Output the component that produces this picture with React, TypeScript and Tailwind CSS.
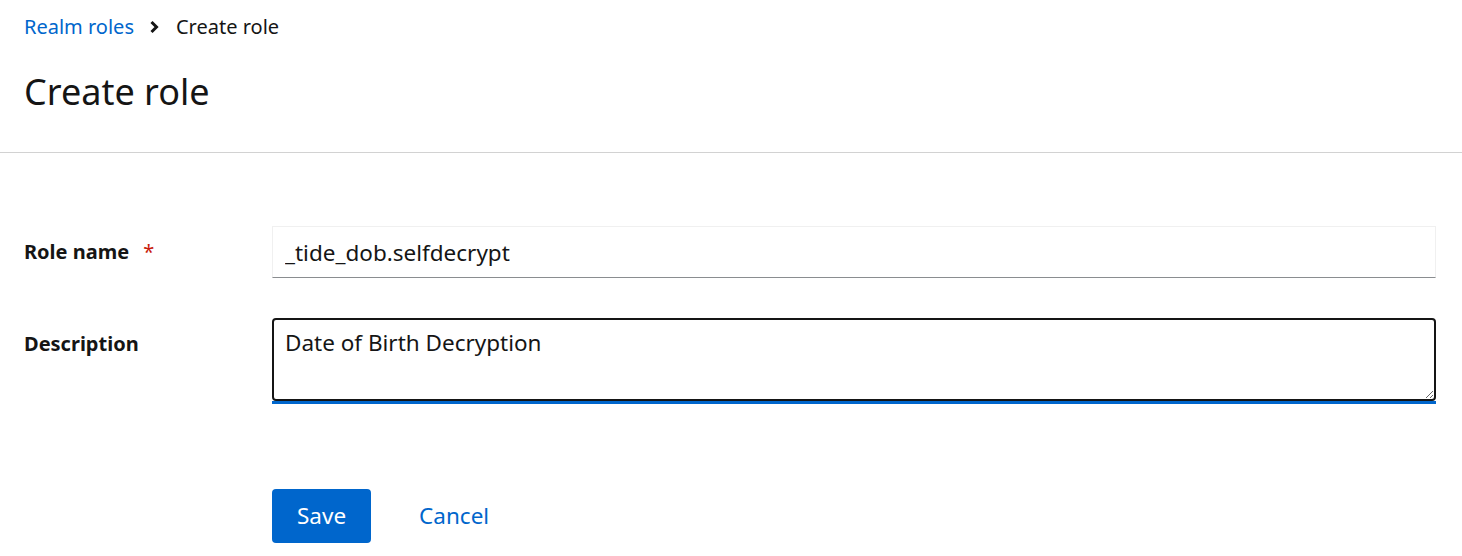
const font = { fontFamily: '"Noto Sans", "Open Sans", sans-serif' };

function Breadcrumb() {
  return (
    <nav className="flex items-center text-[20px] leading-[30px]">
      <a href="#" className="text-[#0066cc]">Realm roles</a>
      <svg viewBox="0 0 10 14" className="w-[10px] h-[14px] ml-[15px] mr-[17px]">
        <path d="M2.5 2 L7.5 7 L2.5 12" fill="none" stroke="#151515" strokeWidth="3" strokeLinejoin="miter" />
      </svg>
      <span className="text-[#151515]">Create role</span>
    </nav>
  );
}

export default function App() {
  return (
    <div className="w-[1462px] h-[556px] bg-white text-[#151515] overflow-hidden" style={font}>
      {/* page header */}
      <section className="px-6 pt-[12px] pb-[36px] border-b border-[#d2d2d2]">
        <Breadcrumb />
        <h1 className="mt-[26px] text-[36px] leading-[48px] font-normal">Create role</h1>
      </section>

      {/* form */}
      <section className="pl-6 pr-[26px] pt-[73px]">
        <div className="grid grid-cols-[248px_1fr] gap-y-[40px] items-start">
          <label className="flex items-center h-[52px] text-[20px] font-bold">
            Role name
            <span className="ml-[14px] text-[#c9190b] font-normal">*</span>
          </label>
          <input
            defaultValue="_tide_dob.selfdecrypt"
            className="h-[52px] px-[12px] text-[22.5px] bg-white border border-[#f0f0f0] border-b-[#8a8d90] outline-none"
            style={font}
          />

          <label className="flex items-center h-[52px] text-[20px] font-bold">Description</label>
          <div className="relative h-[86px] border-b-[3px] border-[#0066cc]">
            <textarea
              defaultValue="Date of Birth Decryption"
              className="w-full h-full block px-[11px] py-[7px] text-[22.5px] leading-[32px] bg-white border-[2px] border-[#151515] rounded-[4px] outline-none resize-y"
              style={font}
            />
          </div>
        </div>

        <div className="flex items-center gap-[24px] ml-[248px] mt-[85px]">
          <button className="h-[54px] px-[25px] bg-[#0066cc] text-white text-[22.5px] rounded-[4px]">Save</button>
          <button className="h-[54px] px-[24px] text-[#0066cc] text-[22.5px]">Cancel</button>
        </div>
      </section>
    </div>
  );
}
